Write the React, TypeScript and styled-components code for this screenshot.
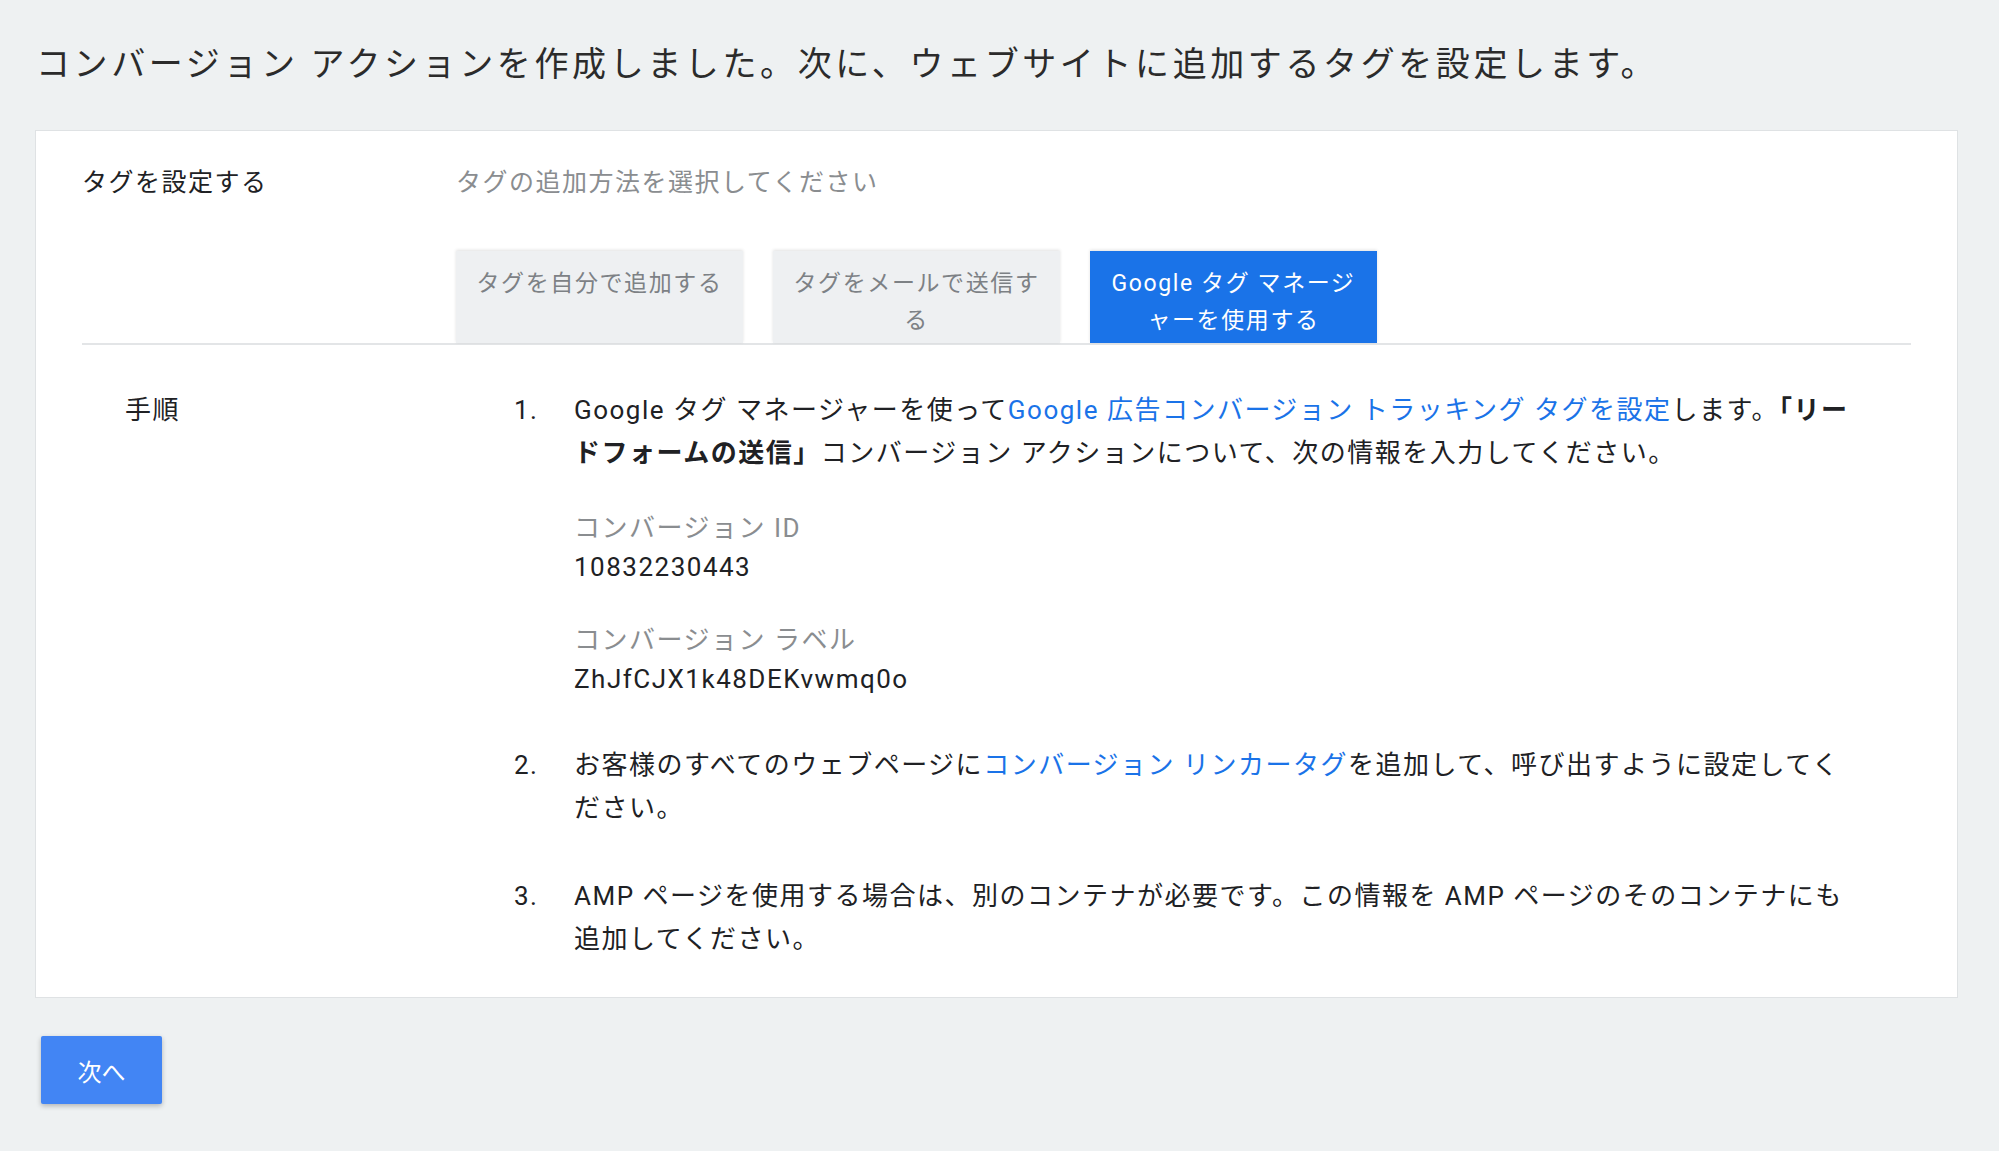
import React from "react";
import styled, { createGlobalStyle } from "styled-components";

const Global = createGlobalStyle`
  html, body { margin: 0; background: #eef1f2; }
  body { font-family: Roboto, "Noto Sans CJK JP", sans-serif; color: #202124; }
`;

const Page = styled.div`
  padding: 40px 41px 60px 35px;
  width: 1999px;
  box-sizing: border-box;
`;
const Title = styled.h1`
  margin: 0 0 42px 1px;
  font-size: 34px;
  font-weight: 400;
  letter-spacing: 3.6px;
  line-height: 48px;
  color: #2b2b2b;
`;
const Card = styled.div`
  background: #fff;
  border: 1px solid #dfe2e4;
  padding: 34px 46px 36px 46px;
`;
const HeaderRow = styled.div`
  display: grid;
  grid-template-columns: 374px 1fr;
  font-size: 25px;
  letter-spacing: 1.5px;
  line-height: 36px;
`;
const Subtitle = styled.div`
  color: #8a8d90;
`;
const Tabs = styled.div`
  display: flex;
  gap: 30px;
  padding-left: 374px;
  margin-top: 50px;
  border-bottom: 2px solid #e3e5e7;
`;
const Tab = styled.div<{ $active?: boolean }>`
  width: 287px;
  height: 92px;
  box-sizing: border-box;
  padding: 14px 16px 0;
  text-align: center;
  font-size: 23px;
  letter-spacing: 1.6px;
  line-height: 37px;
  background: ${(p) => (p.$active ? "#1a73e8" : "#eef0f2")};
  color: ${(p) => (p.$active ? "#fff" : "#7d8185")};
  box-shadow: 0 -1px 3px rgba(0, 0, 0, 0.12);
`;
const Body = styled.div`
  display: grid;
  grid-template-columns: 432px 1fr;
  padding-top: 44px;
  font-size: 26px;
  letter-spacing: 1.5px;
  line-height: 43px;
`;
const StepLabel = styled.div`
  padding-left: 43px;
`;
const List = styled.ol`
  margin: 0;
  padding: 0;
  list-style: none;
  display: flex;
  flex-direction: column;
  gap: 45px;
  padding-right: 50px;
`;
const Item = styled.li`
  display: grid;
  grid-template-columns: 60px 1fr;
`;
const Link = styled.span`
  color: #1a73e8;
`;
const Field = styled.div`
  margin-top: 34px;
  line-height: 39px;
`;
const FieldLabel = styled.div`
  color: #8a8d90;
`;
const Button = styled.button`
  margin-top: 38px;
  margin-left: 6px;
  width: 121px;
  height: 68px;
  border: none;
  border-radius: 2px;
  background: #4285f4;
  color: #fff;
  font-size: 24px;
  font-family: inherit;
  box-shadow: 0 2px 5px rgba(0, 0, 0, 0.25);
`;

export default function App() {
  return (
    <>
      <Global />
      <Page>
        <Title>コンバージョン アクションを作成しました。次に、ウェブサイトに追加するタグを設定します。</Title>
        <Card>
          <HeaderRow>
            <div>タグを設定する</div>
            <Subtitle>タグの追加方法を選択してください</Subtitle>
          </HeaderRow>
          <Tabs>
            <Tab>タグを自分で追加する</Tab>
            <Tab>タグをメールで送信する</Tab>
            <Tab $active>Google タグ マネージャーを使用する</Tab>
          </Tabs>
          <Body>
            <StepLabel>手順</StepLabel>
            <List>
              <Item>
                <span>1.</span>
                <div>
                  Google タグ マネージャーを使って<Link>Google 広告コンバージョン トラッキング タグを設定</Link>します。<b>「リードフォームの送信」</b>コンバージョン アクションについて、次の情報を入力してください。
                  <Field>
                    <FieldLabel>コンバージョン ID</FieldLabel>
                    <div>10832230443</div>
                  </Field>
                  <Field>
                    <FieldLabel>コンバージョン ラベル</FieldLabel>
                    <div>ZhJfCJX1k48DEKvwmq0o</div>
                  </Field>
                </div>
              </Item>
              <Item>
                <span>2.</span>
                <div>
                  お客様のすべてのウェブページに<Link>コンバージョン リンカータグ</Link>を追加して、呼び出すように設定してください。
                </div>
              </Item>
              <Item>
                <span>3.</span>
                <div>AMP ページを使用する場合は、別のコンテナが必要です。この情報を AMP ページのそのコンテナにも追加してください。</div>
              </Item>
            </List>
          </Body>
        </Card>
        <Button>次へ</Button>
      </Page>
    </>
  );
}
